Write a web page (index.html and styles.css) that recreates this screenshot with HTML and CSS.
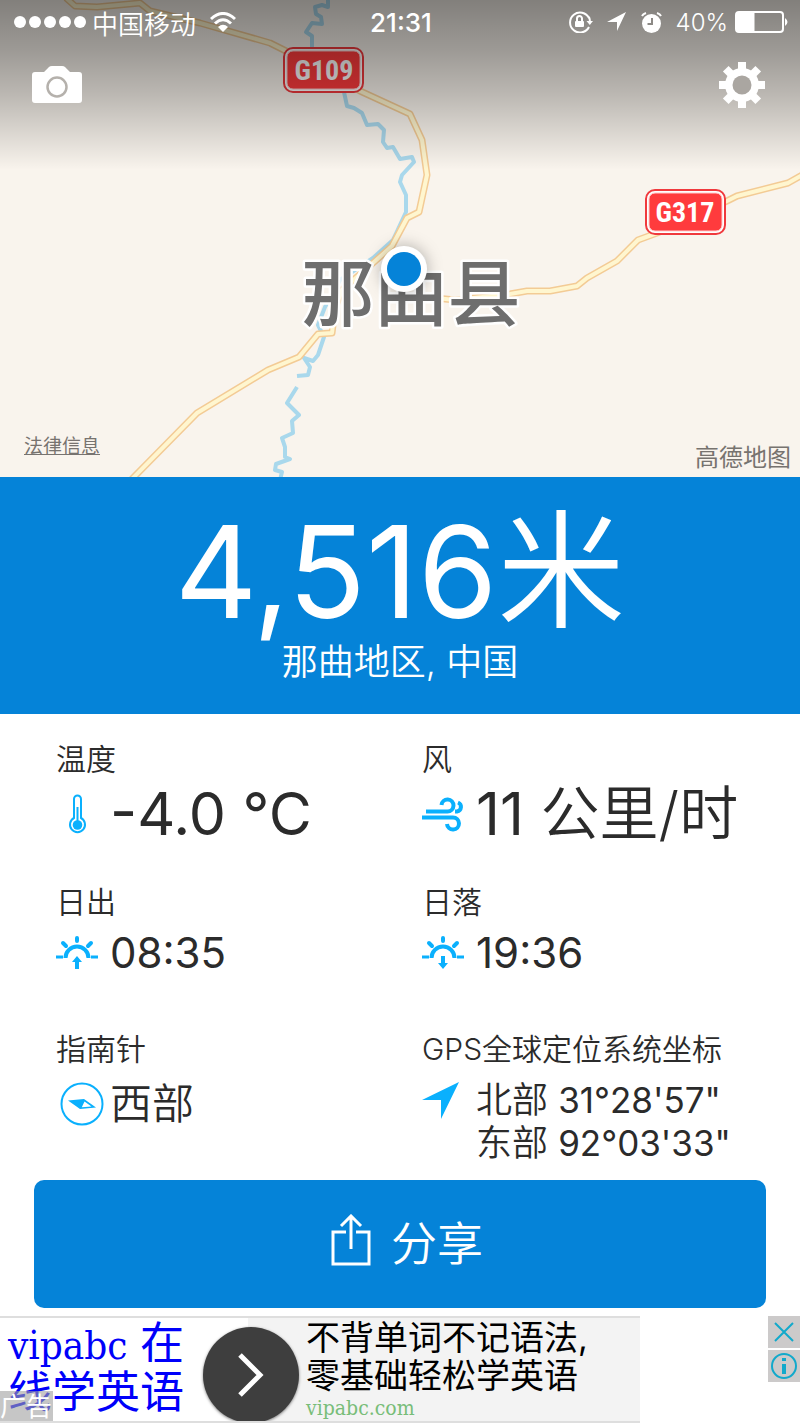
FILE: index.html
```
<!DOCTYPE html>
<html lang="zh-CN">

<head>
    <meta charset="utf-8">
    <meta name="viewport" content="width=device-width, initial-scale=1">
    <title>海拔</title>
    <link rel="stylesheet" href="styles.css">
</head>

<body>
    <header class="map">
        <svg class="mapCanvas" viewBox="0 0 800 477">
            <!-- river -->
            <g class="river">
                <path d="M328 0V7L322 5L315 7L316 14L321 17L322 24L312 23L306 32L312 36V48" />
                <path d="M344 92L347 106L354 108L362 113L367 125L378 124L384 130L383 142L387 148L393 147L400 159L412 157L414 162L402 175L400 182L406 195L406 212L393 240L373 258L340 280L325 307L318 325L324 337L318 355L313 361L304 358L310 367L308 375L297 376" />
                <path d="M297 387L287 403L299 415L292 421L293 433L282 438L285 447L285 457L290 459L276 464L275 470L282 472L280 480" />
            </g>
            <!-- roads -->
            <g class="roadEdge">
                <path id="road1" d="M66 -2L75 6L97 7L140 3L150 11L200 23L270 43L290 53L360 91L410 114L422 140L427 175L419 212L407 218L392 246L373 263L342 290L335 308L332 333L318 334L299 357L268 370L197 413L131 480" />
                <path id="road2" d="M426 297L455 300L510 294L527 291H550L577 286L587 278L617 261L638 240L657 233L727 201L737 196L788 183L804 174" />
            </g>
            <g class="roadFill">
                <use href="#road1" />
                <use href="#road2" />
            </g>
            <!-- road signs -->
            <g class="sign">
                <rect class="signOuter" x="284" y="48" width="79" height="44" rx="9" />
                <rect class="signInner" x="287" y="51" width="73" height="38" rx="6" />
                <text x="324" y="80">G109</text>
                <rect class="signOuter" x="646" y="190" width="79" height="44" rx="9" />
                <rect class="signInner" x="649" y="193" width="73" height="38" rx="6" />
                <text x="685" y="222">G317</text>
            </g>
            <text class="city" x="411" y="320">那曲县</text>
            <text class="amap" x="791" y="466">高德地图</text>
            <circle class="pinRing" cx="404" cy="269" r="23" />
            <circle class="pinDot" cx="404" cy="269" r="17" />
        </svg>
        <div class="topBar">
            <div class="status">
                <div class="statusLeft">
                    <span class="signal"><i></i><i></i><i></i><i></i><i></i></span>
                    <span>中国移动</span>
                    <svg class="wifi" width="26" height="20" viewBox="0 0 26 20">
                        <path d="M1 7Q13 -4 25 7M5 11.500Q13 4 21 11.500" />
                        <path class="solid" d="M8 15Q13 10.500 18 15L13 20Z" />
                    </svg>
                </div>
                <span class="clock">21:31</span>
                <div class="statusRight">
                    <svg width="24" height="22" viewBox="0 0 24 22">
                        <path class="line" d="M20 7A10 10 0 1 0 20 16M20 6Q21 8 21 12" />
                        <path d="M17.500 10H24L20.800 14Z" />
                        <rect x="6" y="10" width="9" height="6" rx="1" />
                        <path class="line" d="M8 10V7.500a2.500 2.500 0 0 1 5 0V10" />
                    </svg>
                    <svg width="20" height="20" viewBox="0 0 20 20">
                        <path d="M19 0L10 19V10H0Z" />
                    </svg>
                    <svg width="21" height="21" viewBox="0 0 21 21">
                        <circle cx="10.500" cy="11.500" r="9.500" />
                        <path class="line" d="M1 4Q2 2 5 1M20 4Q19 2 16 1" />
                        <path class="hands" d="M11 6V12H6.500" />
                    </svg>
                    <span>40%</span>
                    <svg width="53" height="22" viewBox="0 0 53 22">
                        <rect class="line" x="1" y="1" width="47" height="20" rx="3" />
                        <path d="M2 2H19.500V20H2ZM50 7Q55 11 50 15Z" />
                    </svg>
                </div>
            </div>
            <div class="actions">
                <button class="iconButton" aria-label="相机">
                    <svg width="50" height="38" viewBox="0 0 50 38">
                        <path fill="#fff" d="M3 6H12L17 1Q18 0 20 0H30Q32 0 33 1L38 6H47Q50 6 50 9V34Q50 37 47 37H3Q0 37 0 34V9Q0 6 3 6Z" />
                        <circle cx="25" cy="21" r="9.500" fill="none" stroke="#b5b1ac" stroke-width="2.500" />
                    </svg>
                </button>
                <button class="iconButton" aria-label="设置">
                    <svg width="46" height="46" viewBox="-23 -23 46 46">
                        <g fill="#fff">
                            <rect x="-4" y="-23" width="8" height="46" />
                            <rect x="-23" y="-4" width="46" height="8" />
                            <rect x="-4" y="-23" width="8" height="46" transform="rotate(45)" />
                            <rect x="-4" y="-23" width="8" height="46" transform="rotate(-45)" />
                            <circle r="17" />
                        </g>
                        <circle r="9.500" fill="#aaa6a1" />
                    </svg>
                </button>
            </div>
        </div>
        <a class="legal" href="#">法律信息</a>
    </header>

    <section class="altitude">
        <h1><span class="num">4,516</span>米</h1>
        <p>那曲地区, 中国</p>
    </section>

    <main class="details">
        <div class="cell">
            <h2>温度</h2>
            <div class="value big">
                <svg width="42" height="42" viewBox="0 0 42 42">
                    <path class="blueLine thin" d="M18 25V6a3.500 3.500 0 0 1 7 0V25a7.500 7.500 0 1 1 -7 0Z" />
                    <path class="blueLine thin" d="M21.500 14V30" />
                    <circle class="blue" cx="21.500" cy="32" r="4.800" />
                </svg>
                <span class="num">-4.0 °C</span>
            </div>
        </div>
        <div class="cell">
            <h2>风</h2>
            <div class="value big">
                <svg width="42" height="42" viewBox="0 0 42 42">
                    <path class="blueLine" d="M4 18.500H25.500A6 6 0 1 0 19.500 12M0 24.500H31A6 6 0 1 1 25 31M33 18.500H35A4.700 4.700 0 0 0 36 9.500" />
                </svg>
                <span><span class="num">11</span> 公里/时</span>
            </div>
        </div>
        <div class="cell">
            <h2>日出</h2>
            <div class="value">
                <svg width="42" height="42" viewBox="0 0 42 42">
                    <path class="blueLine" d="M9.500 26A11.500 11.500 0 0 1 32.500 26" />
                    <path class="blueLine ray" d="M21 6V9M7 11L10 14M35 11L32 14" />
                    <path class="blueLine side" d="M0 25H7M35 25H42" />
                    <path class="blue" d="M21 24L26 30H23V37H19V30H16Z" />
                </svg>
                <span class="num">08:35</span>
            </div>
        </div>
        <div class="cell">
            <h2>日落</h2>
            <div class="value">
                <svg width="42" height="42" viewBox="0 0 42 42">
                    <path class="blueLine" d="M9.500 26A11.500 11.500 0 0 1 32.500 26" />
                    <path class="blueLine ray" d="M21 6V9M7 11L10 14M35 11L32 14" />
                    <path class="blueLine side" d="M0 25H7M35 25H42" />
                    <path class="blue" d="M19 24H23V31H26L21 37L16 31H19Z" />
                </svg>
                <span class="num">19:36</span>
            </div>
        </div>
        <div class="cell">
            <h2>指南针</h2>
            <div class="value compass">
                <svg width="44" height="44" viewBox="0 0 44 44">
                    <circle class="blueLine thin" cx="22" cy="22" r="20.500" />
                    <path class="blue" fill-rule="evenodd" d="M8 18.500L24 17L36 25.500L20 27ZM24.500 19.500L21.800 25.300L31.500 24.500Z" />
                </svg>
                <span>西部</span>
            </div>
        </div>
        <div class="cell">
            <h2>GPS全球定位系统坐标</h2>
            <div class="value gps">
                <svg width="42" height="42" viewBox="0 0 42 42">
                    <path class="blue" d="M37 3L19 40V21L0 21Z" />
                </svg>
                <span>北部 <span class="num">31°28'57"</span><br>东部 <span class="num">92°03'33"</span></span>
            </div>
        </div>
    </main>

    <button class="share">
        <svg width="40" height="52" viewBox="0 0 40 52">
            <path d="M15 18H2V50H38V18H25M20 35V3M10 12L20 2L30 12" />
        </svg>
        <span>分享</span>
    </button>

    <footer class="ad">
        <div class="adMain">
            <a class="adTitle" href="#"><span>vipabc</span> 在<br>线学英语</a>
            <button class="adGo" aria-label="打开">
                <svg width="28" height="44" viewBox="0 0 28 44">
                    <path d="M3 2L23 22L3 42" />
                </svg>
            </button>
            <div class="adText">
                <p>不背单词不记语法,</p>
                <p>零基础轻松学英语</p>
                <a href="#">vipabc.com</a>
            </div>
            <span class="adTag">广告</span>
        </div>
        <div class="adTools">
            <button aria-label="关闭">
                <svg width="32" height="32" viewBox="0 0 32 32">
                    <path d="M7 7L25 25M25 7L7 25" />
                </svg>
            </button>
            <button aria-label="信息">
                <svg width="32" height="32" viewBox="0 0 32 32">
                    <circle cx="16" cy="16" r="12" />
                    <path class="infoMark" d="M16 8V11M16 14V24" />
                </svg>
            </button>
        </div>
    </footer>
</body>

</html>
```
FILE: styles.css
```
* {
    box-sizing: border-box;
}

body {
    margin: 0;
    background: #fff;
    color: #2b2b2b;
    font-family: Inter, 'Noto Sans CJK SC', sans-serif;
    font-weight: 350;
}

h1,
h2,
p {
    margin: 0;
    font-weight: inherit;
}

button {
    border: 0;
    padding: 0;
    background: none;
    font: inherit;
    cursor: pointer;
}

svg {
    display: block;
    flex: none;
}

/* digits are a step heavier than the characters */
.num {
    font-weight: 400;
}

/* map */
.map {
    position: relative;
    overflow: hidden;
    background: #f9f4ed;
}

.mapCanvas {
    width: 100%;
    height: auto;
}

.river {
    fill: none;
    stroke: #a9d8ec;
    stroke-width: 4;
    stroke-linejoin: round;
}

.roadEdge {
    fill: none;
    stroke-linejoin: round;
}

.roadEdge {
    stroke: #f3cb95;
    stroke-width: 7;
}

.roadFill {
    fill: none;
    stroke: #fff6cf;
    stroke-width: 4;
    stroke-linejoin: round;
}

.signOuter {
    fill: #fff;
    stroke: #f0393d;
    stroke-width: 2;
}

.signInner {
    fill: #ff3b3d;
    stroke: #ffc9c9;
    stroke-width: 1;
}

.sign text {
    fill: #fff;
    font: bold 28px 'Liberation Sans Narrow', 'Roboto Condensed', Roboto, sans-serif;
    text-anchor: middle;
}

.city {
    fill: #6e6e6e;
    stroke: #fff;
    stroke-width: 5;
    stroke-linejoin: round;
    paint-order: stroke;
    font: 500 73px 'Noto Sans CJK SC', sans-serif;
    text-anchor: middle;
}

.amap {
    fill: #77736f;
    font: 400 24px 'Noto Sans CJK SC', sans-serif;
    text-anchor: end;
}

.pinRing {
    fill: #fff;
    filter: drop-shadow(0 0 8px rgba(0, 0, 0, 0.3));
}

.pinDot {
    fill: #0583d8;
}

.topBar {
    position: absolute;
    top: 0;
    left: 0;
    right: 0;
    height: 170px;
    color: #fff;
    background: linear-gradient(rgba(0, 0, 0, 0.48), rgba(0, 0, 0, 0.37) 30%, rgba(0, 0, 0, 0.25) 55%, rgba(0, 0, 0, 0.13) 77%, rgba(0, 0, 0, 0));
}

.status {
    display: grid;
    grid-template-columns: 1fr auto 1fr;
    align-items: center;
    height: 44px;
    padding: 0 12px 0 14px;
    font-size: 26px;
}

.statusLeft,
.statusRight {
    display: flex;
    align-items: center;
}

.statusLeft {
    gap: 6px;
}

.statusRight {
    justify-content: flex-end;
    gap: 14px;
    fill: #fff;
}

.statusRight span {
    margin-right: -7px;
    font-size: 24px;
}

.signal {
    display: flex;
    gap: 3px;
}

.signal i {
    width: 12px;
    height: 12px;
    border-radius: 50%;
    background: #fff;
}

.wifi {
    margin-left: 8px;
    fill: none;
    stroke: #fff;
    stroke-width: 3;
}

.wifi .solid {
    fill: #fff;
    stroke: none;
}

.line {
    fill: none;
    stroke: #fff;
    stroke-width: 2;
}

.hands {
    fill: none;
    stroke: #8c8985;
    stroke-width: 2;
}

.clock {
    font-weight: 500;
}

.actions {
    display: flex;
    justify-content: space-between;
    align-items: center;
    height: 82px;
    padding: 0 35px 0 32px;
}

.legal {
    position: absolute;
    left: 3%;
    bottom: 16px;
    color: #77736f;
    font-size: 19px;
    line-height: 28px;
    font-weight: 400;
}

/* altitude */
.altitude {
    padding: 27px 0 29px;
    background: #0583d8;
    color: #fff;
    text-align: center;
}

.altitude h1 {
    font-size: 128px;
    line-height: 136px;
}

.altitude p {
    font-size: 36px;
    line-height: 45px;
}

/* weather and position */
.details {
    display: grid;
    grid-template-columns: 366fr 378fr;
    grid-template-rows: 143px 147px auto;
    padding: 27px 0 15px 56px;
}

.cell {
    display: flex;
    flex-direction: column;
    gap: 4px;
}

.cell h2 {
    font-size: 30px;
    line-height: 36px;
}

.value {
    display: flex;
    align-items: center;
    gap: 12px;
    font-size: 42px;
    line-height: 58px;
    white-space: nowrap;
}

.big {
    font-size: 59px;
    line-height: 66px;
}

.compass {
    gap: 6px;
    padding-left: 4px;
    line-height: 66px;
}

.gps {
    align-items: flex-start;
    padding-top: 8px;
    font-size: 36px;
    line-height: 43px;
}

.gps .num {
    font-size: 35px;
}

.blue {
    fill: #0ab0fd;
}

.blueLine {
    fill: none;
    stroke: #0ab0fd;
    stroke-width: 4;
}

.ray {
    stroke-linecap: round;
}

.side {
    stroke-width: 3;
}

.thin {
    stroke-width: 2;
}

/* share */
.share {
    display: flex;
    justify-content: center;
    align-items: center;
    gap: 20px;
    width: calc(100% - 68px);
    height: 128px;
    margin: 0 34px 8px;
    padding: 0 0 8px 14px;
    border-radius: 10px;
    background: #0583d8;
    color: #fff;
    font-size: 46px;
}

.share svg {
    fill: none;
    stroke: #fff;
    stroke-width: 3;
}

/* ad */
.ad {
    display: flex;
    justify-content: space-between;
    align-items: flex-start;
}

.adMain {
    position: relative;
    display: flex;
    width: 80%;
    height: 107px;
    overflow: hidden;
    border-top: 2px solid #dedede;
    border-bottom: 2px solid #dedede;
    background: linear-gradient(90deg, #fff 248px, #f3f3f3 248px);
    color: #000;
    font-weight: 400;
}

.adTitle {
    flex: none;
    width: 203px;
    padding: 2px 0 0 8px;
    color: #0000fa;
    font-family: 'DejaVu Serif Condensed', 'DejaVu Serif', 'Noto Sans CJK SC', serif;
    font-size: 44px;
    line-height: 48px;
    text-decoration: none;
    white-space: nowrap;
}

.adTitle span {
    font-size: 40px;
}

.adGo {
    display: flex;
    justify-content: center;
    align-items: center;
    flex: none;
    width: 96px;
    height: 96px;
    margin-top: 9px;
    border-radius: 50%;
    background: #3e3e3e;
    box-shadow: 0 1px 3px rgba(0, 0, 0, 0.5);
}

.adGo path {
    fill: none;
    stroke: #fff;
    stroke-width: 5;
}

.adText {
    padding: 1px 0 0 7px;
    font-size: 34px;
    line-height: 38px;
    white-space: nowrap;
}

.adText a {
    display: block;
    color: #78bd78;
    font-family: 'DejaVu Serif Condensed', 'DejaVu Serif', serif;
    font-size: 21px;
    line-height: 26px;
    text-decoration: none;
}

.adTag {
    position: absolute;
    left: 0;
    bottom: -2px;
    width: 53px;
    height: 32px;
    background: rgba(160, 160, 160, 0.6);
    color: #fff;
    font-size: 26px;
    line-height: 32px;
}

.adTools {
    display: flex;
    flex-direction: column;
    gap: 2px;
}

.adTools button {
    background: #cccaca;
}

.adTools svg {
    fill: none;
    stroke: #12a9cb;
    stroke-width: 2;
}

.adTools .infoMark {
    stroke-width: 4;
}
```
